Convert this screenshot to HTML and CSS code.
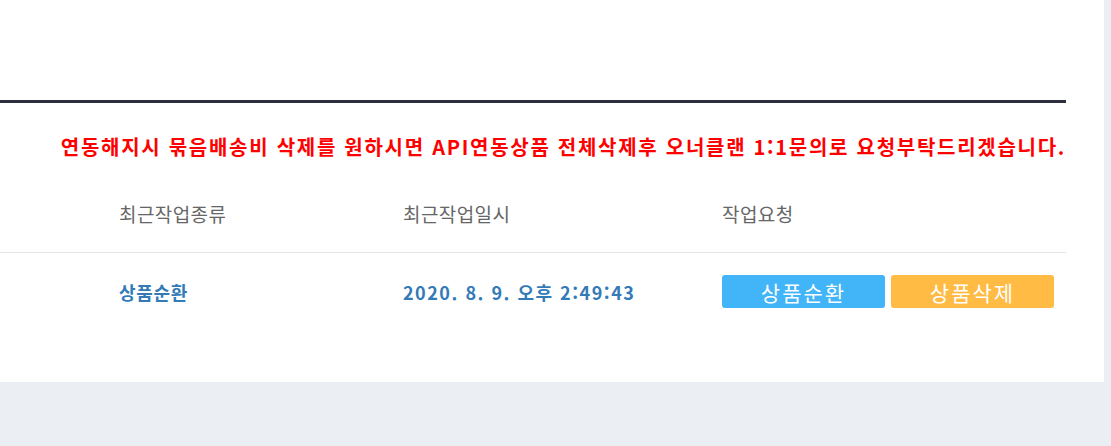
FILE: index.html
```html
<!DOCTYPE html>
<html lang="ko">
<head>
  <meta charset="UTF-8">
  <meta name="viewport" content="width=device-width, initial-scale=1.0">
  <title>API 연동 작업</title>
  <link rel="stylesheet" href="styles.css">
</head>
<body>
  <div class="panel">
    <div class="panel-top"></div>

    <div class="panel-body">
      <p class="notice">연동해지시 묶음배송비 삭제를 원하시면 API연동상품 전체삭제후 오너클랜 1:1문의로 요청부탁드리겠습니다.</p>

      <div class="job-table">
        <div class="job-row job-head">
          <div class="job-cell">최근작업종류</div>
          <div class="job-cell">최근작업일시</div>
          <div class="job-cell">작업요청</div>
        </div>
        <div class="job-row job-data">
          <div class="job-cell">상품순환</div>
          <div class="job-cell job-date">2020. 8. 9. 오후 2:49:43</div>
          <div class="job-cell job-actions">
            <button class="btn btn-cycle">상품순환</button>
            <button class="btn btn-delete">상품삭제</button>
          </div>
        </div>
      </div>
    </div>
  </div>
</body>
</html>
```

FILE: styles.css
```css
body {
  margin: 0;
  padding: 0;
  background: #ebeef3;
  font-family: "Noto Sans CJK KR", "Noto Sans", sans-serif;
}

.panel {
  width: 1104px;
  height: 382px;
  background: #fff;
}

.panel-top {
  height: 100px;
}

.panel-body {
  width: 1066px;
  border-top: 3px solid #2d2f3c;
}

.notice {
  margin: 0;
  padding-top: 30px;
  padding-bottom: 14px;
  line-height: 28px;
  font-size: 20px;
  font-weight: bold;
  letter-spacing: 1.72px;
  color: #ff0000;
  text-align: right;
  white-space: nowrap;
}

.job-row {
  display: grid;
  grid-template-columns: 284px 319px 1fr;
  align-items: center;
  height: 77px;
  padding-left: 119px;
}

.job-head {
  border-bottom: 1px solid #e5e5e5;
  font-size: 19px;
  letter-spacing: 0.4px;
  color: #666;
}

.job-data {
  font-size: 18px;
  font-weight: bold;
  letter-spacing: 0.7px;
  color: #337ab7;
}

.job-date {
  letter-spacing: 1.5px;
}

.job-actions {
  display: flex;
  gap: 6px;
}

.btn {
  width: 163px;
  height: 33px;
  border: 0;
  border-radius: 3px;
  padding: 0;
  font-family: inherit;
  font-size: 21px;
  letter-spacing: 2px;
  color: #fff;
  cursor: pointer;
}

.btn-cycle {
  background: #42b4f8;
}

.btn-delete {
  background: #ffbb44;
}
```
